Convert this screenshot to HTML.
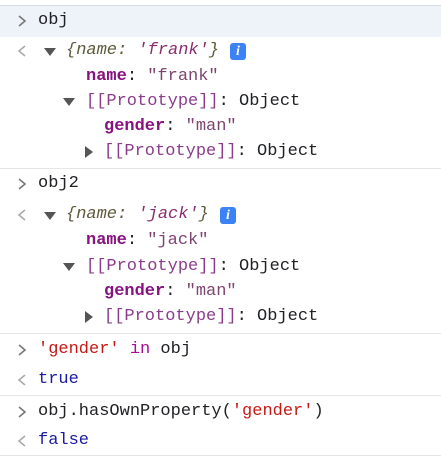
<!DOCTYPE html><html><head><style>
body{margin:0;width:441px;height:456px;background:#fff;font-family:"Liberation Mono",monospace;font-size:17px;position:relative;overflow:hidden;color:#202124}
.l{position:absolute;white-space:pre;line-height:20px}
.k{color:#881280;font-weight:bold}
.s{color:#7d4470}
.p{color:#8b3d8b}
.i{color:#5c5a3a;font-style:italic}
.i b{font-weight:normal;color:#8a2d6e}
.r{color:#c41a16}
.kw{color:#aa0d91}
.b{color:#1a1aa6}
.ch{position:absolute;left:16px}
.sep{position:absolute;left:0;width:441px;height:1px;background:#e4e6ea}
.tri{position:absolute;width:0;height:0}
.dn{border-left:6px solid transparent;border-right:6px solid transparent;border-top:8px solid #555}
.rt{border-top:6px solid transparent;border-bottom:6px solid transparent;border-left:8px solid #555}
.info{position:absolute;width:16px;height:17px;background:#3b82f6;border-radius:3px;color:#fff;font:bold italic 14px "Liberation Serif",serif;text-align:center;line-height:17px}
</style></head><body>
<div style="position:absolute;top:5px;left:0;width:441px;height:31px;background:#eef2f9;border-top:1px solid #d6dbe6"></div>
<svg class="ch" style="top:14px" width="12" height="14"><path d="M3 2 L9 7 L3 12" fill="none" stroke="#777" stroke-width="1.6"/></svg><div class="l" style="left:38px;top:11px">obj</div>
<svg class="ch" style="top:44px" width="12" height="14"><path d="M9 2 L3 7 L9 12" fill="none" stroke="#aaa" stroke-width="1.6"/></svg><div class="tri dn" style="left:44px;top:48px"></div>
<div class="l i" style="left:66px;top:41px">{name: <b>'frank'</b>}</div><div class="info" style="left:230px;top:43px">i</div>
<div class="l" style="left:86px;top:67px"><span class="k">name</span>: <span class="s">"frank"</span></div>
<div class="tri dn" style="left:63px;top:98px"></div><div class="l" style="left:86px;top:92px"><span class="p">[[Prototype]]</span>: Object</div>
<div class="l" style="left:104px;top:117px"><span class="k">gender</span>: <span class="s">"man"</span></div>
<div class="tri rt" style="left:85px;top:146px"></div><div class="l" style="left:104px;top:142px"><span class="p">[[Prototype]]</span>: Object</div>
<div class="sep" style="top:168px"></div>
<svg class="ch" style="top:177px" width="12" height="14"><path d="M3 2 L9 7 L3 12" fill="none" stroke="#777" stroke-width="1.6"/></svg><div class="l" style="left:38px;top:174px">obj2</div>
<svg class="ch" style="top:208px" width="12" height="14"><path d="M9 2 L3 7 L9 12" fill="none" stroke="#aaa" stroke-width="1.6"/></svg><div class="tri dn" style="left:44px;top:212px"></div>
<div class="l i" style="left:66px;top:205px">{name: <b>'jack'</b>}</div><div class="info" style="left:220px;top:207px">i</div>
<div class="l" style="left:86px;top:231px"><span class="k">name</span>: <span class="s">"jack"</span></div>
<div class="tri dn" style="left:63px;top:263px"></div><div class="l" style="left:86px;top:257px"><span class="p">[[Prototype]]</span>: Object</div>
<div class="l" style="left:104px;top:282px"><span class="k">gender</span>: <span class="s">"man"</span></div>
<div class="tri rt" style="left:85px;top:311px"></div><div class="l" style="left:104px;top:307px"><span class="p">[[Prototype]]</span>: Object</div>
<div class="sep" style="top:333px"></div>
<svg class="ch" style="top:343px" width="12" height="14"><path d="M3 2 L9 7 L3 12" fill="none" stroke="#777" stroke-width="1.6"/></svg><div class="l" style="left:38px;top:340px"><span class="r">'gender'</span> <span class="kw">in</span> obj</div>
<svg class="ch" style="top:373px" width="12" height="14"><path d="M9 2 L3 7 L9 12" fill="none" stroke="#aaa" stroke-width="1.6"/></svg><div class="l b" style="left:38px;top:370px">true</div>
<div class="sep" style="top:395px"></div>
<svg class="ch" style="top:405px" width="12" height="14"><path d="M3 2 L9 7 L3 12" fill="none" stroke="#777" stroke-width="1.6"/></svg><div class="l" style="left:38px;top:402px">obj.hasOwnProperty(<span class="r">'gender'</span>)</div>
<svg class="ch" style="top:434px" width="12" height="14"><path d="M9 2 L3 7 L9 12" fill="none" stroke="#aaa" stroke-width="1.6"/></svg><div class="l b" style="left:38px;top:431px">false</div>
<div class="sep" style="top:455px"></div>
</body></html>
